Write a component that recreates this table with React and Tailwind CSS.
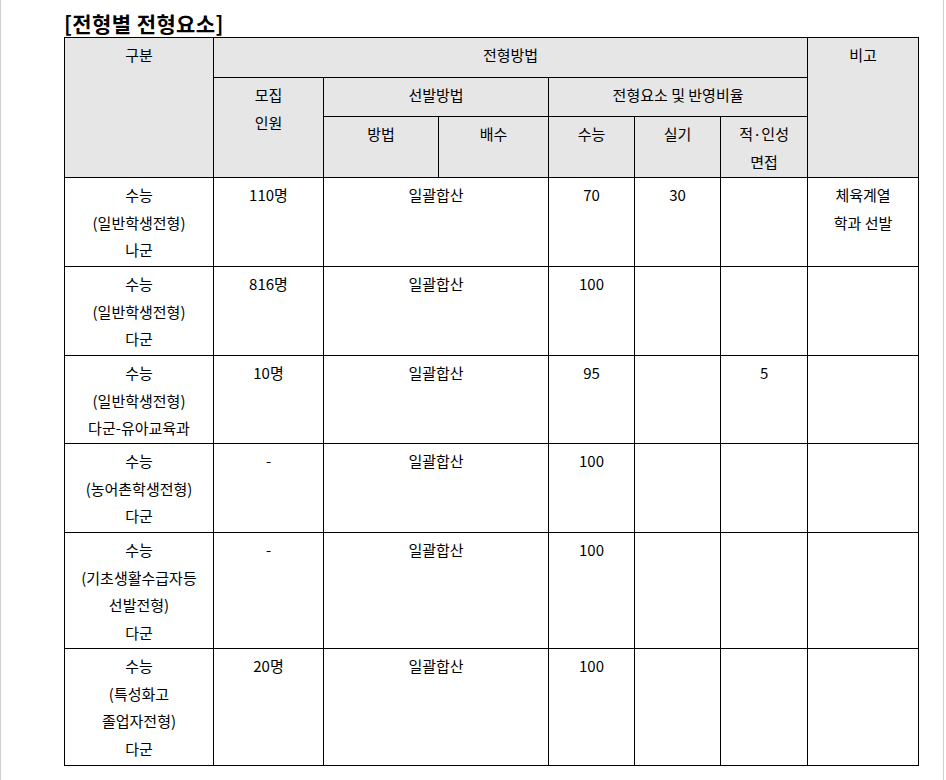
const rows = [
  { h: "h-[89px]", g: ["수능", "(일반학생전형)", "나군"], n: "110명", s: "70", p: "30", i: "", note: ["체육계열", "학과 선발"] },
  { h: "h-[89px]", g: ["수능", "(일반학생전형)", "다군"], n: "816명", s: "100", p: "", i: "", note: [] },
  { h: "h-[88px]", g: ["수능", "(일반학생전형)", "다군-유아교육과"], n: "10명", s: "95", p: "", i: "5", note: [] },
  { h: "h-[89px]", g: ["수능", "(농어촌학생전형)", "다군"], n: "-", s: "100", p: "", i: "", note: [] },
  { h: "h-[116px]", g: ["수능", "(기초생활수급자등", "선발전형)", "다군"], n: "-", s: "100", p: "", i: "", note: [] },
  { h: "h-[117px]", g: ["수능", "(특성화고", "졸업자전형)", "다군"], n: "20명", s: "100", p: "", i: "", note: [] },
];

function Lines({ items }) {
  return items.map((t, k) => (
    <span key={k}>
      {k > 0 && <br />}
      {t}
    </span>
  ));
}

const cell = "border border-black align-top text-center px-1 pt-[3px] pb-0 font-normal";
const head = cell + " bg-[#e6e6e6]";

export default function App() {
  return (
    <div className="min-h-[780px] bg-white border-l border-r border-[#cfcfcf] w-[944px] text-black" style={{ fontFamily: '"Noto Sans CJK KR", "Noto Sans", sans-serif' }}>
      <div className="pl-[63px] pt-[10px]">
        <h1 className="text-[21px] font-bold leading-[27px] tracking-[0.4px]">[전형별 전형요소]</h1>
        <table className="table-fixed border-collapse w-[854px] text-[15px] leading-[27.5px]">
          <colgroup>
            <col className="w-[149px]" />
            <col className="w-[110px]" />
            <col className="w-[115px]" />
            <col className="w-[110px]" />
            <col className="w-[86px]" />
            <col className="w-[86px]" />
            <col className="w-[87px]" />
            <col className="w-[111px]" />
          </colgroup>
          <thead>
            <tr className="h-[40px]">
              <th rowSpan={3} className={head}>구분</th>
              <th colSpan={6} className={head}>전형방법</th>
              <th rowSpan={3} className={head}>비고</th>
            </tr>
            <tr className="h-[39px]">
              <th rowSpan={2} className={head}>모집<br />인원</th>
              <th colSpan={2} className={head}>선발방법</th>
              <th colSpan={3} className={head}>전형요소 및 반영비율</th>
            </tr>
            <tr className="h-[61px]">
              <th className={head}>방법</th>
              <th className={head}>배수</th>
              <th className={head}>수능</th>
              <th className={head}>실기</th>
              <th className={head}>적·인성<br />면접</th>
            </tr>
          </thead>
          <tbody>
            {rows.map((r, k) => (
              <tr key={k} className={r.h}>
                <td className={cell}><Lines items={r.g} /></td>
                <td className={cell}>{r.n}</td>
                <td colSpan={2} className={cell}>일괄합산</td>
                <td className={cell}>{r.s}</td>
                <td className={cell}>{r.p}</td>
                <td className={cell}>{r.i}</td>
                <td className={cell}><Lines items={r.note} /></td>
              </tr>
            ))}
          </tbody>
        </table>
      </div>
    </div>
  );
}
